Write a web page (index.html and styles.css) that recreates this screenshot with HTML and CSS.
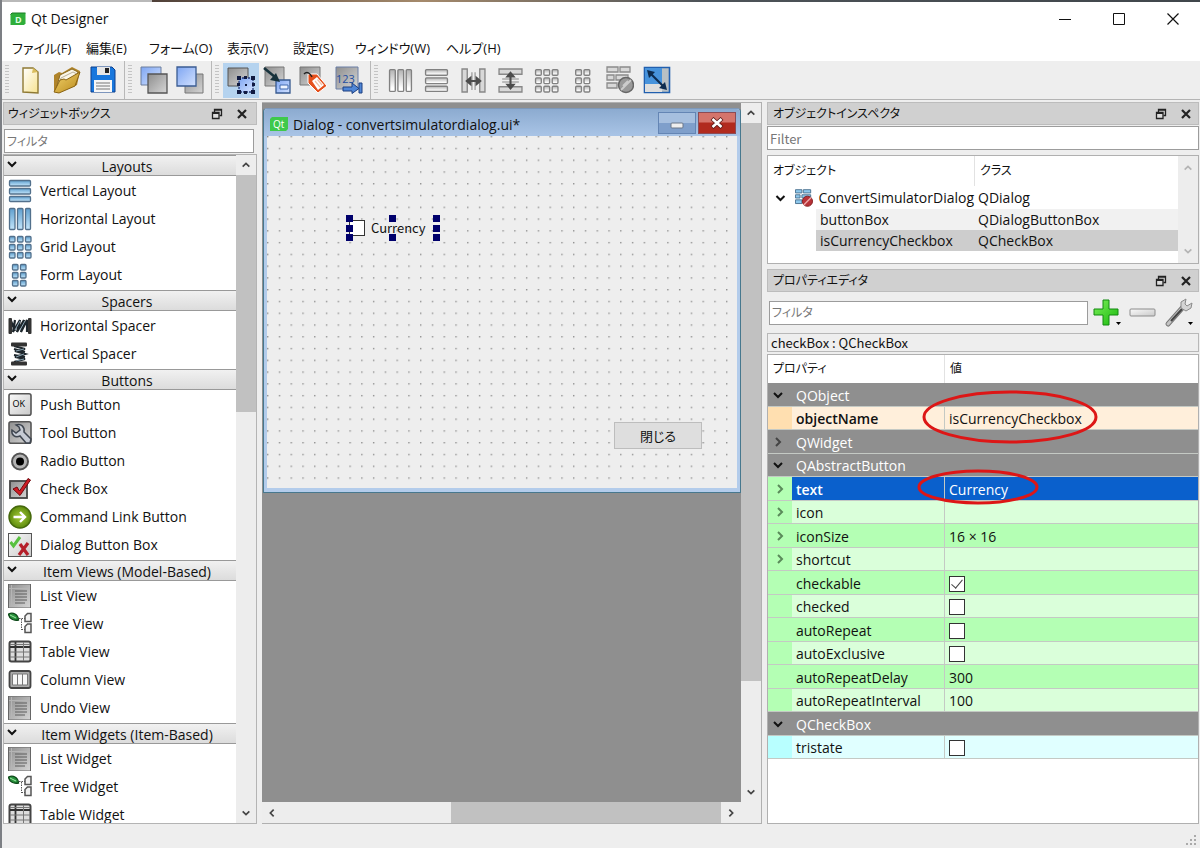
FILE: index.html
```html
<!DOCTYPE html>
<html lang="ja">
<head>
<meta charset="utf-8">
<title>Qt Designer</title>
<link rel="stylesheet" href="styles.css">
</head>
<body>
<svg class="defs" aria-hidden="true">
  <defs>
    <linearGradient id="gGray" x1="0" y1="0" x2="1" y2="1"><stop offset="0" stop-color="#8e8e8e"/><stop offset="1" stop-color="#d6d6d6"/></linearGradient>
    <linearGradient id="gLight" x1="0" y1="0" x2="1" y2="1"><stop offset="0" stop-color="#fafafa"/><stop offset="1" stop-color="#c9c9c9"/></linearGradient>
    <linearGradient id="gBlue" x1="0" y1="0" x2="1" y2="1"><stop offset="0" stop-color="#7fa6f2"/><stop offset="1" stop-color="#d3e2ff"/></linearGradient>
    <linearGradient id="gBar" x1="0" y1="0" x2="0" y2="1"><stop offset="0" stop-color="#5f9fce"/><stop offset="1" stop-color="#c4e6fb"/></linearGradient>
    <linearGradient id="gFolder" x1="0" y1="0" x2="1" y2="1"><stop offset="0" stop-color="#f3d36c"/><stop offset="1" stop-color="#b98a1c"/></linearGradient>
    <linearGradient id="gPlus" x1="0" y1="0" x2="1" y2="1"><stop offset="0" stop-color="#7df05a"/><stop offset="1" stop-color="#18b80c"/></linearGradient>
    <linearGradient id="gPage" x1="0" y1="0" x2="1" y2="1"><stop offset="0" stop-color="#ffffff"/><stop offset="1" stop-color="#f7e38f"/></linearGradient>
    <radialGradient id="gGreen"><stop offset="0" stop-color="#a8cc3a"/><stop offset="1" stop-color="#5c8a0c"/></radialGradient>
  </defs>
  <symbol id="down" viewBox="0 0 12 12"><path d="M2 4l4 4 4-4" fill="none" stroke="currentColor" stroke-width="2"/></symbol>
  <symbol id="up" viewBox="0 0 12 12"><path d="M2 8l4-4 4 4" fill="none" stroke="currentColor" stroke-width="2"/></symbol>
  <symbol id="right" viewBox="0 0 12 12"><path d="M4 2l4 4-4 4" fill="none" stroke="currentColor" stroke-width="2"/></symbol>
  <symbol id="left" viewBox="0 0 12 12"><path d="M8 2L4 6l4 4" fill="none" stroke="currentColor" stroke-width="2"/></symbol>
  <symbol id="float" viewBox="0 0 12 12"><path d="M3.500 4V1.500h7v6H8.500M3.500 2.200h7" fill="none" stroke="#222" stroke-width="1.300"/><path d="M1.500 4.500h6.500v6H1.500zM1.500 5.300h6.500" fill="#ddd" stroke="#222" stroke-width="1.300"/></symbol>
  <symbol id="close" viewBox="0 0 12 12"><path d="M2 2l8 8M10 2l-8 8" stroke="#222" stroke-width="2.200"/></symbol>
  <symbol id="vlay" viewBox="0 0 24 24"><g fill="url(#gBar)" stroke="#52708c" stroke-width="1.300"><rect x="1.500" y="1.500" width="21" height="5.500" rx="1"/><rect x="1.500" y="9.500" width="21" height="5.500" rx="1"/><rect x="1.500" y="17.500" width="21" height="5" rx="1"/></g></symbol>
  <symbol id="hlay" viewBox="0 0 24 24"><g fill="url(#gBar)" stroke="#52708c" stroke-width="1.300"><rect x="1.500" y="1.500" width="5.500" height="21" rx="1"/><rect x="9.500" y="1.500" width="5.500" height="21" rx="1"/><rect x="17.500" y="1.500" width="5" height="21" rx="1"/></g></symbol>
  <symbol id="grid" viewBox="0 0 24 24"><g fill="url(#gBar)" stroke="#52708c" stroke-width="1.300"><rect x="1.500" y="1.500" width="5.500" height="5.500" rx="1"/><rect x="9.500" y="1.500" width="5.500" height="5.500" rx="1"/><rect x="17.500" y="1.500" width="5.500" height="5.500" rx="1"/><rect x="1.500" y="9.500" width="5.500" height="5.500" rx="1"/><rect x="9.500" y="9.500" width="5.500" height="5.500" rx="1"/><rect x="17.500" y="9.500" width="5.500" height="5.500" rx="1"/><rect x="1.500" y="17.500" width="5.500" height="5.500" rx="1"/><rect x="9.500" y="17.500" width="5.500" height="5.500" rx="1"/><rect x="17.500" y="17.500" width="5.500" height="5.500" rx="1"/></g></symbol>
  <symbol id="form" viewBox="0 0 24 24"><g fill="url(#gBar)" stroke="#52708c" stroke-width="1.300"><rect x="4.500" y="1.500" width="5.500" height="5.500" rx="1"/><rect x="12.500" y="1.500" width="5.500" height="5.500" rx="1"/><rect x="4.500" y="9.500" width="5.500" height="5.500" rx="1"/><rect x="12.500" y="9.500" width="5.500" height="5.500" rx="1"/><rect x="4.500" y="17.500" width="5.500" height="5.500" rx="1"/><rect x="12.500" y="17.500" width="5.500" height="5.500" rx="1"/></g></symbol>
  <symbol id="hspace" viewBox="0 0 24 24"><path d="M3 7l4 10M7 6l-2 12L12 6l-3 12 7-12-3 12 6-12v12" fill="none" stroke="#1d262c" stroke-width="2.200"/><path d="M7 16l5-9M12 16l5-9" stroke="#8ba5b4"/><rect x="0.500" y="4" width="3.500" height="16" rx="1" fill="#333"/><rect x="20" y="4" width="3.500" height="16" rx="1" fill="#333"/></symbol>
  <symbol id="vspace" viewBox="0 0 24 24"><path d="M6 4l11 3-10 2 10 3-10 3 10 2-11 3M6 7l11 3M6 13l11 2" fill="none" stroke="#1d262c" stroke-width="2.200"/><path d="M8 9l8-2M8 15l8-3M8 19l8-2" stroke="#8ba5b4"/><rect x="3" y="0.500" width="16" height="4" rx="1" fill="#333"/><rect x="3" y="19.500" width="16" height="4" rx="1" fill="#333"/></symbol>
  <symbol id="tool" viewBox="0 0 24 24"><rect x="1" y="0.800" width="22" height="21.500" rx="2" fill="url(#gGray)" stroke="#555" stroke-width="1.600"/><path d="M8 4c5-2 9 2 8 7l7 7-1 4-4 0-6-7c-5 2-9-1-8-6l4 3 4-3-1-3z" fill="#c6cbd4" stroke="#3f4650" stroke-width="1.500"/></symbol>
  <symbol id="radio" viewBox="0 0 24 24"><circle cx="12" cy="12.500" r="8" fill="#b4b4b4" stroke="#555" stroke-width="2"/><circle cx="12" cy="12.500" r="4" fill="#000"/></symbol>
  <symbol id="check" viewBox="0 0 24 24"><rect x="2" y="4" width="17" height="17" fill="url(#gGray)" stroke="#444" stroke-width="1.800"/><path d="M5 12l4-2 2.500 4L20 1.500l2.500 1.500L12 18.500z" fill="#d01c24" stroke="#700a10"/></symbol>
  <symbol id="cmd" viewBox="0 0 24 24"><circle cx="12" cy="12" r="11" fill="url(#gGreen)" stroke="#45680c" stroke-width="1.400"/><path d="M5.500 12h11M12 7l5 5-5 5" fill="none" stroke="#fff" stroke-width="2.400"/></symbol>
  <symbol id="dbb" viewBox="0 0 24 24"><rect x="0.500" y="0.500" width="23" height="23" fill="url(#gLight)" stroke="#555"/><path d="M2.500 9l3 4L12 4" fill="none" stroke="#59c140" stroke-width="3"/><path d="M12 11l8 11M20 10l-9 12" stroke="#b51f2a" stroke-width="3.200"/></symbol>
  <symbol id="list" viewBox="0 0 24 24"><rect x="0.500" y="0" width="22" height="24" fill="url(#gGray)" stroke="#666"/><path d="M3.500 1v22M1 4.500h21" stroke="#b5b5b5"/><path d="M7 7h12M7 10h12M7 13h12M7 16h12M7 19h10" stroke="#5c5c5c"/></symbol>
  <symbol id="tree" viewBox="0 0 24 24"><path d="M11 6.500h6M13.500 7v11M13.500 17.500h4" fill="none" stroke="#555" stroke-dasharray="1.500 1"/><path d="M0.500 2C5 0 10 2 10.500 8 6 9 1 7 .5 2z" fill="#27923b" stroke="#0d4818" stroke-width="1.300"/><path d="M2 3l6 3" stroke="#a3e6a8"/><g fill="#f2f2f2" stroke="#555" stroke-width="1.500"><path d="M19.500 1.500h3.500v8h-6V4zM19.500 12h3.500v8.500h-6v-6z"/></g></symbol>
  <symbol id="table" viewBox="0 0 24 24"><rect x="1.500" y="1.500" width="21" height="20" rx="2" fill="#ddd" stroke="#444" stroke-width="2"/><path d="M7.500 2v19M2 7h20" stroke="#333" stroke-width="1.800"/><path d="M15.500 2v19M2 12h20M2 17h20M2 4.500h20" stroke="#777"/></symbol>
  <symbol id="column" viewBox="0 0 24 24"><rect x="1.500" y="3" width="21" height="17" rx="2" fill="#aaa" stroke="#444" stroke-width="1.800"/><path d="M4.500 6h5v11h-5zM9.500 6h5v11h-5zM14.500 6h5v11h-5z" fill="#f6f6f6" stroke="#777"/></symbol>
</svg>

<div class="desktop-edge"></div>
<header class="titlebar">
  <svg class="app-icon" viewBox="0 0 16 14"><path d="M2 1h13.500v10.500L14 13H.5V2.500z" fill="#2fae3a"/><path d="M.5 2.500L2 1h13.500" stroke="#1b7d25" fill="none"/><text x="5" y="10.500" class="app-letter">D</text></svg>
  <span class="app-name">Qt Designer</span>
  <button class="win" aria-label="Minimize"><svg viewBox="0 0 12 12"><path d="M0 6.500h12" stroke="#111"/></svg></button>
  <button class="win" aria-label="Maximize"><svg viewBox="0 0 12 12"><path d="M.5.5h11v11H.5z" fill="none" stroke="#111"/></svg></button>
  <button class="win" aria-label="Close"><svg viewBox="0 0 12 12"><path d="M.5.5l11 11M11.500.5l-11 11" stroke="#111" stroke-width="1.200"/></svg></button>
</header>
<nav class="menu">
  <button>ファイル(F)</button><button>編集(E)</button><button>フォーム(O)</button><button>表示(V)</button><button>設定(S)</button><button>ウィンドウ(W)</button><button>ヘルプ(H)</button>
</nav>
<div class="toolbar">
  <div class="group">
    <i class="grip"></i>
    <button aria-label="New"><svg viewBox="0 0 28 28"><path d="M6 2h10l5 4v21l-15-1z" fill="url(#gPage)" stroke="#8f7a34" stroke-width="1.400"/><path d="M16 2l-1 5 6-1" fill="#d9bd5c"/></svg></button>
    <button aria-label="Open"><svg viewBox="0 0 28 28"><path d="M1 25V9l5-3 3 1 10-6 8 4-3 14L5 27z" fill="#b0842a"/><path d="M4 20L7 9l12-6 6 3-3 9z" fill="#fbf6e6" stroke="#8a6a20"/><path d="M6 17L8 12l12-6 6 3" fill="none" stroke="#b9b09a"/><path d="M1 26l6-12 4-1 2 1 14-8-5 14L6 27z" fill="url(#gFolder)" stroke="#8a6414"/></svg></button>
    <button aria-label="Save"><svg viewBox="0 0 28 28"><path d="M2 1h21l3 3v22H2z" fill="#1877dd" stroke="#0c3f8c"/><path d="M8 1h13v8H8z" fill="#e7e7e7"/><path d="M16 2h4v5h-4z" fill="#222"/><path d="M5 14h18v12H5z" fill="#f6f6f6"/><path d="M7 17h14M7 20h14M7 23h14" stroke="#777" stroke-width="1.200"/></svg></button>
  </div>
  <div class="group">
    <i class="grip"></i>
    <button aria-label="Send to back"><svg viewBox="0 0 28 28"><path d="M1 1h20v18H1z" fill="url(#gBlue)" stroke="#6c7f9d"/><path d="M8 8h19v19H8z" fill="url(#gGray)" stroke="#555" stroke-width="1.300"/></svg></button>
    <button aria-label="Bring to front"><svg viewBox="0 0 28 28"><path d="M9 8h18v19H9z" fill="url(#gGray)" stroke="#777"/><path d="M1 1h19v19H1z" fill="url(#gBlue)" stroke="#3b5c92" stroke-width="1.300"/></svg></button>
  </div>
  <div class="group">
    <i class="grip"></i>
    <button class="on" aria-label="Edit widgets"><svg viewBox="0 0 28 28"><path d="M1 2h20v18H1z" fill="url(#gGray)" stroke="#555"/><path d="M12 12h14v14H12z" fill="url(#gBlue)" stroke="#243a78" stroke-width="1.300" stroke-dasharray="2 1"/><path d="M10 10h4v4h-4zM24 10h4v4h-4zM10 24h4v4h-4zM24 24h4v4h-4zM17 10h3v3h-3zM17 25h3v3h-3zM10 17h3v3h-3zM25 17h3v3h-3zM18 18h2v2h-2z" fill="#101a40"/></svg></button>
    <button aria-label="Edit signals and slots"><svg viewBox="0 0 28 28"><path d="M2 1h19v19H2z" fill="url(#gGray)" stroke="#777"/><path d="M13 14h14v13H13z" fill="url(#gBlue)" stroke="#37598f" stroke-width="1.300"/><path d="M17 19h8v4h-8z" fill="#eef4ff" stroke="#3f68b0"/><path d="M1 2l11 9" stroke="#17323c" stroke-width="2.600"/><path d="M17 16l-10-2 6-7z" fill="#17323c"/></svg></button>
    <button aria-label="Edit buddies"><svg viewBox="0 0 28 28"><path d="M1 1h20v18H1z" fill="url(#gGray)" stroke="#777"/><path d="M9 8h9l10 12-9 7L9 17z" fill="#e5501c" stroke="#fff"/><path d="M13 15l5-4 7 8-6 5z" fill="#fff"/><path d="M16 15l5 6M18.500 13.500l4.500 5.500" stroke="#f0c0a8" stroke-width="1.200"/><path d="M5 8c3-3 6-1 8 3" fill="none" stroke="#222" stroke-width="1.500"/></svg></button>
    <button aria-label="Edit tab order"><svg viewBox="0 0 28 28"><path d="M1 1h22v22H1z" fill="url(#gGray)" stroke="#6a7fa6"/><text x="1" y="17" class="tab-num">123</text><path d="M8 21h9v-4l7 5.500-7 5V25H8z" fill="#4f86d6" stroke="#1d3f80"/><path d="M24 17h3v10h-3z" fill="#4f86d6" stroke="#1d3f80"/></svg></button>
  </div>
  <div class="group spread">
    <i class="grip"></i>
    <div class="spread-row">
      <button class="dim" aria-label="Lay out horizontally"><svg viewBox="0 0 24 24"><use href="#hlay"/></svg></button>
      <button class="dim" aria-label="Lay out vertically"><svg viewBox="0 0 24 24"><use href="#vlay"/></svg></button>
      <button class="mono" aria-label="Horizontal splitter"><svg viewBox="0 0 24 24"><path d="M1 1h5v22H1zM18 1h5v22h-5z" fill="#d8d8d8" stroke="#888" stroke-width="1.300"/><path d="M10.500 4v17M13.500 4v17" stroke="#888"/><path d="M4 12.500l6-5v4h4v-4l6 5-6 5v-4h-4v4z" fill="#4c4c4c"/></svg></button>
      <button class="mono" aria-label="Vertical splitter"><svg viewBox="0 0 24 24"><path d="M1 1h22v5H1zM1 18h22v5H1z" fill="#d8d8d8" stroke="#888" stroke-width="1.300"/><path d="M4 10.500h16M4 13.500h16" stroke="#888"/><path d="M12 3l5 6h-4v6h4l-5 6-5-6h4V9H7z" fill="#4c4c4c"/></svg></button>
      <button class="dim" aria-label="Lay out in a grid"><svg viewBox="0 0 24 24"><use href="#grid"/></svg></button>
      <button class="dim" aria-label="Lay out in a form"><svg viewBox="0 0 24 24"><use href="#form"/></svg></button>
      <button aria-label="Break layout"><svg viewBox="0 0 28 28"><g fill="#d8d8d8" stroke="#8b8b8b" stroke-width="1.300"><path d="M1 1h11v5H1zM14 1h10v5H14zM1 9h7v5H1zM10 9h12v5H10zM1 17h10v5H1z"/></g><circle cx="20" cy="19" r="7.500" fill="#999" stroke="#666" stroke-width="1.500"/><path d="M15 24l10-10M17 20l5-5" stroke="#ccc" stroke-width="1.800"/></svg></button>
      <button aria-label="Adjust size"><svg viewBox="0 0 28 28"><path d="M1.500 1.500h25v25h-25z" fill="#b8c0c4" stroke="#215fae" stroke-width="1.600"/><path d="M2 2h17v16H2z" fill="#4793dc"/><path d="M2 18h17v8H2z" fill="#dedede"/><path d="M6 6l16 16" stroke="#0d2c50" stroke-width="2.200"/><path d="M4 4l8 2-6 6zM24 24l-8-2 6-6z" fill="#0d2c50"/></svg></button>
    </div>
  </div>
</div>

<main class="work">
  <section class="dock box-dock">
    <div class="dock-title jp"><span>ウィジェットボックス</span><button aria-label="Float"><svg><use href="#float"/></svg></button><button aria-label="Close"><svg><use href="#close"/></svg></button></div>
    <input class="field jp wide" type="text" placeholder="フィルタ" aria-label="フィルタ">
    <div class="widget-box">
      <div class="widgets">
        <h2><svg><use href="#down"/></svg>Layouts</h2>
        <ul>
          <li><svg><use href="#vlay"/></svg>Vertical Layout</li>
          <li><svg><use href="#hlay"/></svg>Horizontal Layout</li>
          <li><svg><use href="#grid"/></svg>Grid Layout</li>
          <li><svg><use href="#form"/></svg>Form Layout</li>
        </ul>
        <h2><svg><use href="#down"/></svg>Spacers</h2>
        <ul>
          <li><svg><use href="#hspace"/></svg>Horizontal Spacer</li>
          <li><svg><use href="#vspace"/></svg>Vertical Spacer</li>
        </ul>
        <h2><svg><use href="#down"/></svg>Buttons</h2>
        <ul>
          <li><svg viewBox="0 0 24 24"><rect x="1" y="0.800" width="22" height="21.500" rx="2" fill="url(#gLight)" stroke="#555" stroke-width="1.600"/><text x="4.500" y="14" class="ok-text">OK</text></svg>Push Button</li>
          <li><svg><use href="#tool"/></svg>Tool Button</li>
          <li><svg><use href="#radio"/></svg>Radio Button</li>
          <li><svg><use href="#check"/></svg>Check Box</li>
          <li><svg><use href="#cmd"/></svg>Command Link Button</li>
          <li><svg><use href="#dbb"/></svg>Dialog Button Box</li>
        </ul>
        <h2><svg><use href="#down"/></svg>Item Views (Model-Based)</h2>
        <ul>
          <li><svg><use href="#list"/></svg>List View</li>
          <li><svg><use href="#tree"/></svg>Tree View</li>
          <li><svg><use href="#table"/></svg>Table View</li>
          <li><svg><use href="#column"/></svg>Column View</li>
          <li><svg><use href="#list"/></svg>Undo View</li>
        </ul>
        <h2><svg><use href="#down"/></svg>Item Widgets (Item-Based)</h2>
        <ul>
          <li><svg><use href="#list"/></svg>List Widget</li>
          <li><svg><use href="#tree"/></svg>Tree Widget</li>
          <li><svg><use href="#table"/></svg>Table Widget</li>
        </ul>
      </div>
      <div class="vbar"><button aria-label="Scroll up"><svg><use href="#up"/></svg></button><div class="thumb box-thumb"></div><button class="end" aria-label="Scroll down"><svg><use href="#down"/></svg></button></div>
    </div>
  </section>

  <section class="mdi">
    <div class="mdi-area">
      <div class="dialog">
        <div class="dialog-title">
          <svg class="qt" viewBox="0 0 18 14"><path d="M2 0h16v12l-2 2H0V2z" fill="#3fc94b"/><text x="3" y="11" class="qt-text">Qt</text></svg>
          <span>Dialog - convertsimulatordialog.ui*</span>
          <button class="dmin" aria-label="Minimize"><svg viewBox="0 0 14 8"><rect x="1" y="2" width="12" height="5" rx="1" fill="#eee" stroke="#6a7688"/></svg></button>
          <button class="dclose" aria-label="Close"><svg viewBox="0 0 14 12"><path d="M2 1.500l10 9M12 1.500l-10 9" stroke="#5c1b18" stroke-width="4.200"/><path d="M2.500 2l9 8M11.500 2l-9 8" stroke="#fff" stroke-width="2.600"/></svg></button>
        </div>
        <div class="canvas">
          <svg class="dots" aria-hidden="true"><defs><pattern id="dot" width="11.770" height="11.770" patternUnits="userSpaceOnUse"><rect x="0" y="0" width="1.400" height="1.400" fill="#8f8f8f"/></pattern></defs><rect width="100%" height="100%" fill="url(#dot)"/></svg>
          <div class="picked">
            <label><input type="checkbox"><span>Currency</span></label>
            <svg viewBox="0 0 94 28" aria-hidden="true"><path d="M0 0h7v7H0zM43 0h7v7h-7zM87 0h7v7h-7zM0 10h7v7H0zM87 10h7v7h-7zM0 19h7v7H0zM43 19h7v7h-7zM87 19h7v7h-7z" fill="#00006c"/></svg>
          </div>
          <button class="dlg-button">閉じる</button>
        </div>
      </div>
    </div>
    <div class="vbar mdi-v"><button aria-label="Scroll up"><svg><use href="#up"/></svg></button><div class="thumb mdi-vthumb"></div><button class="end" aria-label="Scroll down"><svg><use href="#down"/></svg></button></div>
    <div class="hbar"><button aria-label="Scroll left"><svg><use href="#left"/></svg></button><div class="thumb mdi-hthumb"></div><button aria-label="Scroll right"><svg><use href="#right"/></svg></button></div>
    <div class="corner"></div>
  </section>

  <section class="dock side">
    <div class="dock-title jp"><span>オブジェクトインスペクタ</span><button aria-label="Float"><svg><use href="#float"/></svg></button><button aria-label="Close"><svg><use href="#close"/></svg></button></div>
    <input class="field tall" type="text" placeholder="Filter" aria-label="Filter">
    <div class="inspector">
      <table>
        <colgroup><col class="c-indent"><col class="c-name"><col></colgroup>
        <thead class="jp"><tr><th colspan="2">オブジェクト</th><th>クラス</th></tr></thead>
        <tbody>
          <tr><td colspan="2"><div class="root"><svg class="chev"><use href="#down"/></svg><svg class="obj" viewBox="0 0 20 20"><g fill="#8dc8ec" stroke="#49708e"><path d="M.5 1h7v3.500h-7zM9 1h8v3.500H9zM.5 6.500h5V10h-5zM7.500 6.500H17V10H7.500zM.5 12h7v4h-7z"/></g><circle cx="13.500" cy="13.500" r="5.500" fill="#b83238" stroke="#7f1a1a"/><path d="M9.500 17.500l8-8" stroke="#eaa" stroke-width="1.500"/></svg>ConvertSimulatorDialog</div></td><td>QDialog</td></tr>
          <tr class="alt"><td></td><td>buttonBox</td><td>QDialogButtonBox</td></tr>
          <tr class="sel"><td></td><td>isCurrencyCheckbox</td><td>QCheckBox</td></tr>
        </tbody>
      </table>
      <div class="vbar pale"><button aria-label="Scroll up"><svg><use href="#up"/></svg></button><button class="end" aria-label="Scroll down"><svg><use href="#down"/></svg></button></div>
    </div>
    <div class="dock-title jp"><span>プロパティエディタ</span><button aria-label="Float"><svg><use href="#float"/></svg></button><button aria-label="Close"><svg><use href="#close"/></svg></button></div>
    <div class="prop-tools">
      <input class="field jp" type="text" placeholder="フィルタ" aria-label="プロパティ フィルタ">
      <button aria-label="Add property"><svg viewBox="0 0 30 30"><path d="M11 2h6v9h9v6h-9v10h-6V17H2v-6h9z" fill="url(#gPlus)" stroke="#138a10"/><path d="M24 24h5l-2.500 3z" fill="#000"/></svg></button>
      <button aria-label="Remove property"><svg viewBox="0 0 30 30"><rect x="2" y="11" width="25" height="7" rx="1" fill="url(#gLight)" stroke="#8c8c8c"/></svg></button>
      <button aria-label="Configure"><svg viewBox="0 0 30 30"><path d="M4 26L20 8" stroke="#777" stroke-width="5" stroke-linecap="round"/><path d="M4 26L20 8" stroke="#c4c4c4" stroke-width="3" stroke-linecap="round"/><path d="M7 23l11-12" stroke="#444" stroke-width="2"/><path d="M22 1l-5 3 0 6 5 3 5-3 1-5-5 3-2-2z" fill="#d4d4d4" stroke="#8a8a8a"/><path d="M24 24h5l-2.500 3z" fill="#000"/></svg></button>
    </div>
    <div class="prop-class">checkBox : QCheckBox</div>
    <div class="props">
      <table>
        <colgroup><col class="p-mark"><col class="p-name"><col></colgroup>
        <thead class="jp"><tr><th colspan="2">プロパティ</th><th>値</th></tr></thead>
        <tbody>
          <tr class="cat"><td><svg><use href="#down"/></svg></td><td colspan="2">QObject</td></tr>
          <tr class="peach"><td></td><td><strong>objectName</strong></td><td>isCurrencyCheckbox<svg class="ring ring-a" viewBox="0 0 176 54" aria-hidden="true"><ellipse cx="88" cy="27" rx="86" ry="25"/></svg></td></tr>
          <tr class="cat shut"><td><svg><use href="#right"/></svg></td><td colspan="2">QWidget</td></tr>
          <tr class="cat"><td><svg><use href="#down"/></svg></td><td colspan="2">QAbstractButton</td></tr>
          <tr class="g1 chosen"><td><svg><use href="#right"/></svg></td><td><strong>text</strong></td><td>Currency<svg class="ring ring-b" viewBox="0 0 122 36" aria-hidden="true"><ellipse cx="61" cy="18" rx="59" ry="16"/></svg></td></tr>
          <tr class="g2"><td><svg><use href="#right"/></svg></td><td>icon</td><td></td></tr>
          <tr class="g1"><td><svg><use href="#right"/></svg></td><td>iconSize</td><td>16 × 16</td></tr>
          <tr class="g2"><td><svg><use href="#right"/></svg></td><td>shortcut</td><td></td></tr>
          <tr class="g1"><td></td><td>checkable</td><td><input type="checkbox" checked aria-label="checkable"></td></tr>
          <tr class="g2"><td></td><td>checked</td><td><input type="checkbox" aria-label="checked"></td></tr>
          <tr class="g1"><td></td><td>autoRepeat</td><td><input type="checkbox" aria-label="autoRepeat"></td></tr>
          <tr class="g2"><td></td><td>autoExclusive</td><td><input type="checkbox" aria-label="autoExclusive"></td></tr>
          <tr class="g1"><td></td><td>autoRepeatDelay</td><td>300</td></tr>
          <tr class="g2"><td></td><td>autoRepeatInterval</td><td>100</td></tr>
          <tr class="cat"><td><svg><use href="#down"/></svg></td><td colspan="2">QCheckBox</td></tr>
          <tr class="cyan"><td></td><td>tristate</td><td><input type="checkbox" aria-label="tristate"></td></tr>
        </tbody>
      </table>
    </div>
  </section>
</main>
<footer class="status"><svg viewBox="0 0 12 12" aria-hidden="true"><path d="M8 0h2v2H8zM4 4h2v2H4zM8 4h2v2H8zM0 8h2v2H0zM4 8h2v2H4zM8 8h2v2H8z" fill="#aaa"/></svg></footer>
</body>
</html>
```

FILE: styles.css
```css
* { box-sizing: border-box; }
body {
  margin: 0;
  height: 100vh;
  display: flex;
  flex-direction: column;
  overflow: hidden;
  border-left: 2px solid #7c7f84;
  background: #eeeeee;
  color: #111;
  font: 14px/20px "Open Sans", "Noto Sans CJK JP", sans-serif;
}
button {
  margin: 0;
  padding: 0;
  border: 0;
  background: none;
  color: inherit;
  font: inherit;
}
.defs { position: absolute; width: 0; height: 0; }
.jp, .menu { font-family: "Open Sans", "Noto Sans CJK JP", sans-serif; font-feature-settings: "palt"; }
.jp { font-size: 12px; }
.menu { font-size: 13px; }

.desktop-edge { height: 2px; flex: none; background: linear-gradient(90deg, #b9b9b9 150px, #4f4038 150px, #a58a6c 420px, #4d5358 700px, #40464b); }
.titlebar { flex: none; height: 34px; display: flex; align-items: center; padding-left: 8px; background: #fff; }
.app-icon { width: 16px; height: 14px; }
.app-letter { font: bold 9px "Open Sans", sans-serif; fill: #dfffe0; }
.app-name { flex: 1; padding-left: 5px; }
.win { width: 54px; height: 32px; display: grid; place-items: center; }
.win svg { width: 12px; height: 12px; }

.menu { flex: none; height: 25px; background: #fff; padding: 0 0 2px 10px; display: grid; grid-template-columns: 74px 63px 78px 66px 62px 91px 80px; align-items: center; }
.menu button { text-align: left; white-space: nowrap; }

.toolbar { flex: none; height: 39px; display: flex; align-items: center; border-bottom: 1px solid #b4b4b4; }
.group { display: flex; align-items: center; height: 100%; padding: 0 3px 0 3px; border-right: 1px solid #b8b8b8; }
.group:last-child { border-right: 0; }
.grip { width: 4px; height: 30px; margin-right: 4px; background: repeating-linear-gradient(#c4c4c4 0 1px, #eee 1px 3px); }
.group button { width: 36px; height: 35px; display: grid; place-items: center; }
.group button svg { width: 28px; height: 28px; }
.group .on { background: #b5d3ef; }
.group .dim svg, .group .mono svg { width: 25px; height: 25px; }
.group .dim svg { filter: grayscale(1) brightness(1.2); }
.spread-row { display: flex; justify-content: space-between; width: 293px; }

.work { flex: 1; min-height: 0; display: flex; gap: 5px; padding: 2px 1px 0 1px; }
.dock { display: flex; flex-direction: column; min-width: 0; flex: none; }
.box-dock { width: 254px; }
.side { width: 432px; }
.dock-title { flex: none; height: 23px; display: flex; align-items: center; gap: 13px; padding: 0 8px 0 4px; background: #d0d0d0; border: 1px solid #bcbcbc; }
.side .dock-title { padding-right: 6px; padding-left: 5px; }
.dock-title span { flex: 1; }
.dock-title svg { display: block; width: 12px; height: 12px; }
.field { height: 24px; min-width: 0; padding: 0 2px; border: 1px solid #9c9c9c; background: #fff; outline: 0; }
.field::placeholder { color: #777; opacity: 1; }
.field:not(.jp) { font-family: "Noto Sans CJK JP", sans-serif; font-size: 13px; }
.wide { margin: 4px 3px 1px 1px; }
.tall { margin-top: 1px; }

.widget-box { flex: 1; min-height: 0; display: flex; border: 1px solid #b4b4b4; background: #fff; }
.widgets { flex: 1; overflow: hidden; }
.widgets h2 { position: relative; height: 21px; margin: 0 0 2px; padding-left: 14px; border: solid #999; border-width: 1px 0; background: linear-gradient(#f1f1f1, #dcdcdc); font-size: 14px; font-weight: 400; line-height: 21px; text-align: center; }
.widgets h2 svg { position: absolute; left: 2px; top: 2px; width: 12px; height: 12px; }
.widgets ul { margin: 0; padding: 0; list-style: none; }
.widgets li { height: 28px; display: flex; align-items: center; gap: 8px; padding: 0 0 2px 4px; }
.widgets li svg { width: 24px; height: 24px; }
.ok-text { font: 9px "Open Sans", sans-serif; }
.tab-num { font: 11px "Open Sans", sans-serif; fill: #1f4da0; }

.vbar { width: 20px; flex: none; display: flex; flex-direction: column; background: #ededed; color: #444; }
.vbar button, .hbar button { width: 20px; height: 20px; display: grid; place-items: center; }
.vbar svg, .hbar svg { width: 10px; height: 10px; }
.thumb { background: #c1c1c1; }
.end { margin-top: auto; }
.box-thumb { height: 237px; }
.pale { color: #b4b4b4; padding: 2px 0; }

.mdi { flex: 1; min-width: 0; display: grid; grid-template: 1fr 21px / 1fr 20px; border: solid #b0b0b0; border-width: 1px 1px 1px 0; }
.mdi-area { min-height: 0; min-width: 0; padding: 5px 0 0 1px; background: #8f8f8f; overflow: hidden; }
.mdi-vthumb { height: 558px; }
.hbar { display: flex; align-items: center; background: #ededed; color: #444; }
.mdi-hthumb { width: 270px; height: 100%; margin-left: auto; }
.corner { background: #ededed; }

.dialog { height: 385px; display: flex; flex-direction: column; border: 1px solid #47788e; border-top-color: #7e98b8; border-radius: 4px 4px 0 0; background: #b3cceb; padding: 0 3px 4px; }
.dialog-title { flex: none; height: 27px; margin: 0 -3px; padding: 0 4px 0 6px; display: flex; align-items: center; background: linear-gradient(#8cabd0, #a9c4e6); border-radius: 4px 4px 0 0; }
.dialog-title span { flex: 1; padding: 5px 0 0 5px; }
.qt { width: 18px; height: 14px; margin-top: 2px; }
.qt-text { font: 10px "Open Sans", sans-serif; fill: #fff; }
.dialog-title button { height: 22px; width: 38px; display: grid; place-items: center; border: 1px solid #6485b4; }
.dmin { margin-right: 2px; background: linear-gradient(#a6bfdf 50%, #7f9fcb 50%); }
.dialog-title .dclose { border-color: #8c4b55; background: linear-gradient(#d5746b 45%, #b12a1e 50%); }
.dialog-title button svg { width: 14px; height: 12px; }
.dmin svg { margin-top: 5px; }
.canvas { position: relative; flex: 1; background: #eeeeee; overflow: hidden; }
.dots { position: absolute; left: 0; top: 0; width: 100%; height: 100%; }
.picked { position: absolute; left: 79px; top: 79px; width: 94px; height: 28px; }
.picked label { display: flex; align-items: center; gap: 6px; padding: 4px 0 0 3px; font: 13px/18px "Noto Sans CJK JP", sans-serif; }
.picked svg { position: absolute; left: 0; top: 0; width: 94px; height: 28px; }
.dlg-button { position: absolute; right: 35px; bottom: 39px; width: 88px; height: 27px; border: 1px solid #bdbdbd; background: #dedede; font-size: 13px; font-feature-settings: "palt"; }

input[type="checkbox"] { appearance: none; width: 16px; height: 16px; margin: 0; border: 1px solid #333; background: #fff; display: block; }
input[type="checkbox"]:checked { position: relative; }
input[type="checkbox"]:checked::after { content: ""; position: absolute; left: 4px; top: 0; width: 5px; height: 10px; border: solid #444; border-width: 0 1px 1px 0; transform: rotate(40deg); }

table { border-collapse: separate; border-spacing: 0; table-layout: fixed; width: 100%; }
th { font-weight: 400; text-align: left; }
td, th { padding: 0; white-space: nowrap; }
.inspector { flex: none; height: 109px; margin: 5px 0; display: flex; align-items: flex-start; border: 1px solid #b0b0b0; background: #fff; }
.inspector .vbar { align-self: stretch; }
.inspector table { flex: 1; }
.c-indent { width: 48px; }
.c-name { width: 158px; }
.inspector th { height: 30px; padding-left: 5px; }
.inspector th + th { border-left: 1px solid #e2e2e2; }
.inspector td { height: 21px; line-height: 20px; padding-left: 4px; }
.inspector tbody tr:first-child td { height: 23px; }
.root { display: flex; align-items: center; padding-left: 2px; }
.chev { width: 14px; height: 12px; margin-right: 8px; }
.obj { width: 20px; height: 20px; margin-right: 5px; }
.alt td + td { background: #f1f1f1; }
.sel td + td { background: #cdcdcd; }

.prop-tools { flex: none; height: 41px; display: flex; align-items: center; padding: 0 5px 0 2px; }
.prop-tools .field { flex: 1; }
.prop-tools button { width: 30px; height: 30px; margin-left: 4px; }
.prop-tools button + button { margin-left: 6px; }
.prop-tools svg { display: block; width: 30px; height: 30px; }
.prop-class { flex: none; height: 19px; margin-bottom: 2px; padding-left: 3px; border: 1px solid #b8b8b8; font: 13px/17px "Noto Sans CJK JP", sans-serif; }
.props { flex: 1; min-height: 0; border: 1px solid #b0b0b0; background: #fff; }
.p-mark { width: 24px; }
.p-name { width: 152px; }
.props th { height: 28px; padding-left: 5px; }
.props th + th { border-left: 1px solid #e2e2e2; }
.props td { height: 23px; line-height: 20px; padding: 2px 0 0 4px; border-bottom: 1px solid #c4c9c4; }
.props tbody tr:nth-child(odd) td { height: 24px; }
.props td:nth-child(3) { position: relative; border-left: 1px solid #c4c9c4; }
.props td:first-child { padding: 0 0 0 6px; color: #5a8a5a; }
.props td:first-child svg { display: block; width: 12px; height: 12px; }
.cat td { background: #8f8f8f; color: #fff; font-weight: 500; }
.props .cat td:first-child { color: #111; padding-left: 4px; }
.props .shut td:first-child { color: #444; }
.peach td { background: #ffefdb; }
.peach td:first-child { background: #ffdfb0; }
.g1 td { background: #b4ffb4; }
.g2 td { background: #daffda; }
.g2 td:first-child { background: #b4ffb4; }
.cyan td { background: #e0ffff; }
.cyan td:first-child { background: #b8ffff; }
.chosen td + td { background: #0a60cc; color: #fff; }
.props strong { font-weight: 600; }
.ring { position: absolute; z-index: 1; overflow: visible; fill: none; stroke: #dd1616; stroke-width: 3; }
.ring-a { left: -23px; top: -17px; width: 176px; height: 54px; }
.ring-b { left: -28px; top: -8px; width: 122px; height: 36px; }

.status { flex: none; height: 24px; display: flex; justify-content: flex-end; align-items: flex-end; padding: 0 2px 1px 0; }
.status svg { width: 12px; height: 12px; }
```
